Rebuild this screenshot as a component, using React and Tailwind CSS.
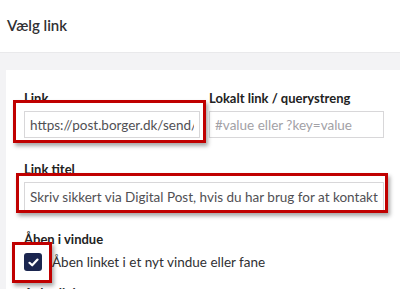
const Field = ({ label, children, className = '' }) => (
  <div className={className}>
    <div className="text-[13px] leading-4 font-bold text-[#222]">{label}</div>
    <div className="mt-[5px]">{children}</div>
  </div>
);

const inputCls =
  'w-full h-[27px] border border-[#d8d7d9] bg-white px-[5px] text-[13.5px] text-[#515054] placeholder:text-[#a2a1a6] outline-none font-["Lato",sans-serif]';

const Marker = ({ className }) => (
  <div
    className={`absolute border-[3px] border-[#c00000] shadow-[2px_3px_4px_rgba(0,0,0,0.35)] pointer-events-none ${className}`}
  />
);

export default function App() {
  return (
    <div className="relative w-[400px] h-[289px] overflow-hidden bg-white font-['Lato',sans-serif]">
      <div className="h-[53px] border-b border-[#e9e9eb] px-[7px] flex items-center">
        <h2 className="text-[15px] font-semibold text-[#303033] -mt-[1px]">Vælg link</h2>
      </div>

      <div className="bg-[#f3f3f5] pl-[6px] pt-[17px] h-full">
        <div className="bg-white pl-[18px] pr-[16px] pt-[20px] h-full">
          <div className="grid grid-cols-[176px_175px] gap-x-[9px]">
            <Field label="Link">
              <input className={inputCls} defaultValue="https://post.borger.dk/send/" />
            </Field>
            <Field label="Lokalt link / querystreng">
              <input className={inputCls} placeholder="#value eller ?key=value" />
            </Field>
          </div>

          <Field label="Link titel" className="mt-[23px] w-[360px]">
            <input
              className={`${inputCls} h-[29px]`}
              defaultValue="Skriv sikkert via Digital Post, hvis du har brug for at kontakte os"
            />
          </Field>

          <Field label="Åben i vindue" className="mt-[20px]">
            <label className="flex items-center gap-[10px] mt-[3px]">
              <span className="w-[18px] h-[18px] rounded-[3px] bg-[#1b264f] flex items-center justify-center">
                <svg width="11" height="9" viewBox="0 0 11 9" fill="none">
                  <path d="M1.5 4.8 L4.2 7.3 L9.5 1.6" stroke="white" strokeWidth="2.2" strokeLinecap="round" strokeLinejoin="round" />
                </svg>
              </span>
              <span className="text-[13.5px] text-[#303033]">Åben linket i et nyt vindue eller fane</span>
            </label>
          </Field>

          <div className="mt-[13px] text-[13px] leading-4 font-bold text-[#303033]">Ankerlink</div>
        </div>
      </div>

      <Marker className="left-[13px] top-[100px] w-[193px] h-[43px]" />
      <Marker className="left-[16px] top-[173px] w-[372px] h-[40px]" />
      <Marker className="left-[12px] top-[242px] w-[40px] h-[41px]" />
    </div>
  );
}
